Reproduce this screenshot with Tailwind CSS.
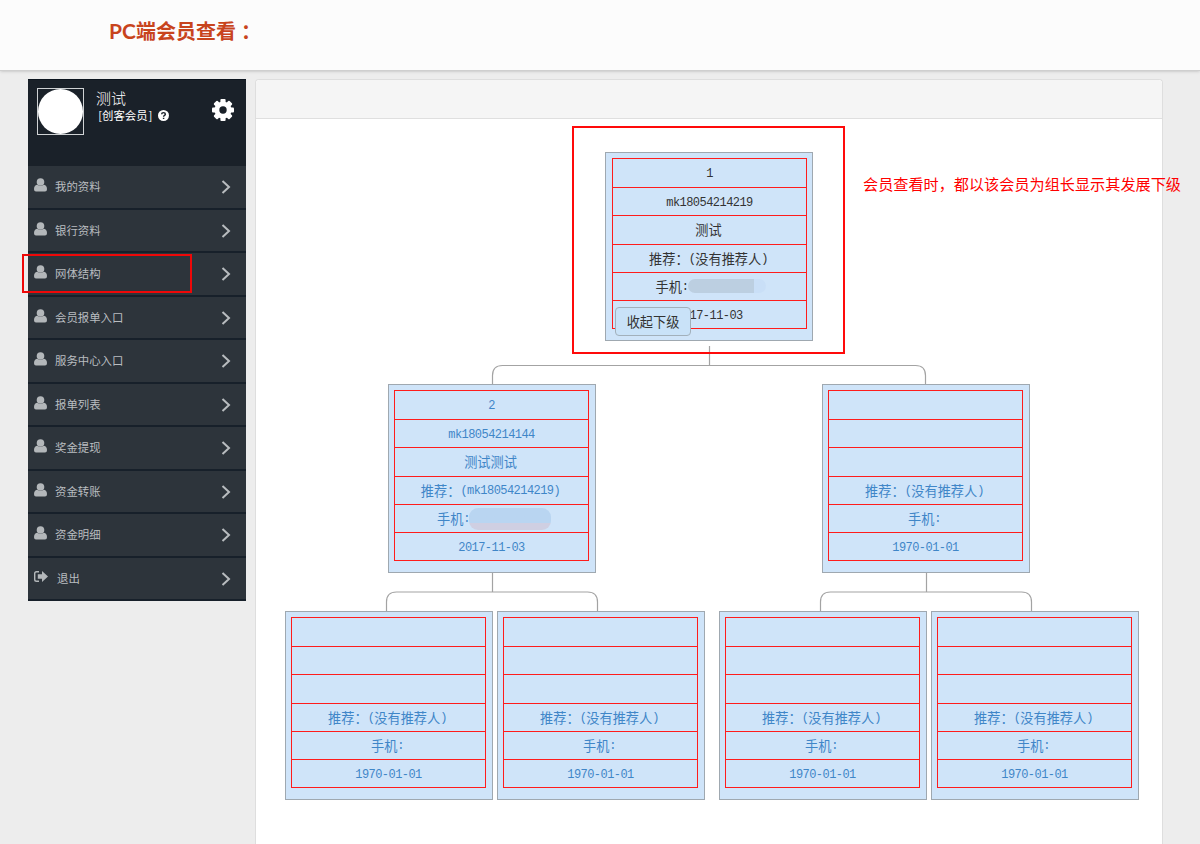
<!DOCTYPE html>
<html lang="zh-CN">
<head>
<meta charset="utf-8">
<title>PC端会员查看</title>
<script src="https://cdn.jsdelivr.net/npm/@tailwindcss/browser@4"></script>
</head>
<body class="relative flex h-[844px] w-[1200px] flex-col overflow-hidden bg-[#ededed] font-['Noto_Sans_CJK_SC',sans-serif]">
<header class="flex h-[71px] shrink-0 items-start border-b border-[#cfcfcf] bg-[#fcfcfc] pt-[16px] pl-[109px] shadow-sm">
  <h1 class="flex text-[20px] leading-[30px] font-bold whitespace-nowrap text-[#c8441d]"><span class="w-[27px] font-[Lato,sans-serif] text-[21px]">PC</span><span>端会员查看</span><span lang="zh-TW" class="pt-[1px] font-['Noto_Sans_CJK_TC',sans-serif]">：</span></h1>
</header>
<div class="flex flex-1 pl-7">
  <aside class="mt-[8px] flex h-[522px] w-[218px] flex-col bg-[#1a2129] text-white">
    <div class="flex h-[87px] shrink-0 items-start border-t border-[#0d1620] pt-[8px] pl-[9px]">
      <div class="h-[47px] w-[47px] border border-[#d0d3d5]"><div class="h-[45px] w-[45px] rounded-full bg-white"></div></div>
      <div class="ml-[12px] w-[116px]">
        <div class="text-[15px] leading-[20px] font-light">测试</div>
        <div class="flex items-center text-[11.4px] leading-[14px]"><span class="w-[6px] text-right">[</span><span class="whitespace-nowrap">创客会员</span><span class="pl-[1px]">]</span>
          <svg class="ml-[6px] h-[11px] w-[11px]" viewBox="0 0 12 12"><circle cx="6" cy="6" r="6" fill="#fff"/><path d="M4 4.6C4 2.3 8 2.3 8 4.6C8 6 6.1 5.8 6.1 7.3M6.1 8.4V9.9" fill="none" stroke="#1a2129" stroke-width="1.6"/></svg>
        </div>
      </div>
      <svg class="mt-[11px] h-[22px] w-[22px]" viewBox="0 0 22 22"><g fill="#fff"><rect x="8.4" y="0" width="5.2" height="22" rx="1"/><rect x="8.4" y="0" width="5.2" height="22" rx="1" transform="rotate(45 11 11)"/><rect x="8.4" y="0" width="5.2" height="22" rx="1" transform="rotate(90 11 11)"/><rect x="8.4" y="0" width="5.2" height="22" rx="1" transform="rotate(135 11 11)"/><circle cx="11" cy="11" r="8.6"/></g><circle cx="11" cy="11" r="3.7" fill="#1a2129"/></svg>
    </div>
    <nav id="menu" class="flex flex-1 flex-col"></nav>
  </aside>
  <main class="mt-[8px] ml-[9px] w-[908px] rounded-t border border-b-0 border-[#dedede] bg-white">
    <div class="h-[39px] rounded-t border-b border-[#dfdfdf] bg-[#f5f5f5]"></div>
  </main>
</div>

<!-- organisation tree canvas -->
<svg class="absolute top-0 left-0" width="1200" height="844" fill="none" stroke="#a3a3a3" stroke-width="1.2">
  <path d="M709.5 346V365.5M492.5 384V375.5Q492.5 365.5 502.5 365.5H915.5Q925.5 365.5 925.5 375.5V384"/>
  <path d="M492.5 573V592M386.5 611V602Q386.5 592 396.5 592H587.5Q597.5 592 597.5 602V611"/>
  <path d="M926.5 573V592M820.5 611V602Q820.5 592 830.5 592H1021.5Q1031.5 592 1031.5 602V611"/>
</svg>
<div id="tree"></div>
<button class="absolute top-[307px] left-[615px] h-[29px] w-[76px] rounded-[4px] border border-[#a2b0bb] bg-[#c9e2f8] text-[13.2px] leading-[28px] whitespace-nowrap text-[#333]">收起下级</button>

<!-- highlights and note -->
<div class="absolute top-[126px] left-[572px] h-[228px] w-[273px] border-2 border-[#ff0a0a]"></div>
<div class="absolute top-[254px] left-[22px] h-[39px] w-[170px] border-2 border-[#ee0808]"></div>
<p class="absolute top-[172px] left-[863px] text-[15.15px] leading-[22px] whitespace-nowrap text-[#ff0000]">会员查看时，都以该会员为组长显示其发展下级</p>

<script>
const user = '<svg class="h-[14px] w-[13px]" viewBox="0 0 13 14" fill="#b3b7ba"><path d="M3 6.8C1 7 0 8.8 0 11.3Q0 13.6 2 13.6H11Q13 13.6 13 11.3C13 8.8 12 7 10 6.8Q6.5 9 3 6.8Z"/><circle cx="6.5" cy="4" r="3.8"/></svg>';
const exit = '<svg class="h-[14px] w-[14px]" viewBox="0 0 14 14"><path d="M5 1.7H2.5Q.7 1.7 .7 3.5V9.5Q.7 11.3 2.5 11.3H5" fill="none" stroke="#b3b7ba" stroke-width="1.4"/><path d="M3.8 4.2H8V1L14 6.5L8 12V8.8H3.8Z" fill="#b3b7ba"/></svg>';
document.getElementById('menu').innerHTML =
  ['我的资料','银行资料','网体结构','会员报单入口','服务中心入口','报单列表','奖金提现','资金转账','资金明细','退出'].map((t, i) => `
  <a class="flex h-[43.5px] shrink-0 items-center border-b-2 border-[#17202a] bg-[#2d343b] pr-[15px] pl-[6px] text-[11.4px] text-[#b9bdc0]">
    <span class="mb-[3px] ${i === 9 ? 'w-[23px]' : 'w-[21px]'}">${i === 9 ? exit : user}</span>
    <span class="flex-1 whitespace-nowrap">${t}</span>
    <svg class="mt-px h-[14px] w-[10px]" viewBox="0 0 10 14" fill="none" stroke="#b8bcbf" stroke-width="2"><path d="M1.5 1L8 7L1.5 13"/></svg>
  </a>`).join('');

const m = s => `<span class="font-['Liberation_Mono',monospace] text-[12px] tracking-[-0.55px]">${s}</span>`;
const none = '推荐：' + m('(') + '没有推荐人' + m(')');
const empty = ['', '', '', none, '手机' + m(':'), m('1970-01-01')];
const nodes = [
  [605, 152, [m('1'), m('mk18054214219'), '测试', none, '手机' + m(':') + '<span class="-ml-[1px] -mr-[4px] -mt-[1px] h-[14px] w-[78px] rounded-full bg-linear-to-r from-[#bccfe1] from-85% to-[#c9dff7] to-85%"></span>', m('2017-11-03')]],
  [388, 384, [m('2'), m('mk18054214144'), '测试测试', '推荐：' + m('(mk18054214219)'), '手机' + m(':') + '<span class="-ml-[1px] -mr-[7px] h-[22px] w-[82px] rounded-[9px] bg-linear-to-b from-[#b9d5f1] from-70% to-[#cfcfe2] to-70%"></span>', m('2017-11-03')]],
  [822, 384, empty], [285, 611, empty], [497, 611, empty], [719, 611, empty], [931, 611, empty]
];
document.getElementById('tree').innerHTML = nodes.map(([x, y, rows], n) => `
  <div class="absolute h-[189px] w-[208px] border border-[#9fa8b0] bg-[#cfe4f9] ${n ? 'pl-[5px] text-[#3f86c8]' : 'pl-[6px] text-[#333]'} pt-[5px]" style="left:${x}px;top:${y}px">
    <div class="grid h-[171px] w-[195px] grid-rows-[28px_27px_28px_27px_27px_27px] gap-px bg-[#ff1c1c] p-px text-[13.2px]">
      ${rows.map((r, i) => `<div class="flex items-center justify-center bg-[#cfe4f9] whitespace-nowrap ${i > 1 && i < 5 ? 'pr-[2px]' : 'pt-[2px]'}"><span class="flex h-[20px] items-center">${r}</span></div>`).join('')}
    </div>
  </div>`).join('');
</script>
</body>
</html>
